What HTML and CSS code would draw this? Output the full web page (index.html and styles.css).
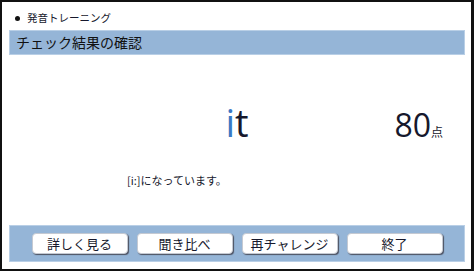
FILE: index.html
```html
<!DOCTYPE html>
<html lang="ja">
<head>
    <meta charset="UTF-8">
    <title>チェック結果の確認</title>
    <link rel="stylesheet" href="styles.css">
</head>
<body>
    <div class="screen">
        <div class="crumb"><span class="dot"></span>発音トレーニング</div>
        <div class="title-bar">チェック結果の確認</div>

        <div class="result">
            <div class="word-row">
                <div></div>
                <div class="word"><span class="hit">i</span>t</div>
                <div class="score">80<span class="unit">点</span></div>
            </div>
            <p class="message">[i:]になっています。</p>
        </div>

        <div class="button-bar">
            <button>詳しく見る</button>
            <button>聞き比べ</button>
            <button>再チャレンジ</button>
            <button>終了</button>
        </div>
    </div>
</body>
</html>
```

FILE: styles.css
```css
html, body {
    margin: 0;
    padding: 0;
    background: #fff;
    font-family: "Noto Sans CJK JP", "Noto Sans", sans-serif;
    color: #16182c;
}

.screen {
    width: 474px;
    height: 271px;
    box-sizing: border-box;
    border: 2px solid #111;
    border-right-width: 3px;
    padding: 0 6px 7px 7px;
    display: flex;
    flex-direction: column;
}

.crumb {
    padding-top: 8px;
    margin-bottom: 4px;
    height: 16px;
    line-height: 16px;
    font-size: 10.5px;
    display: flex;
    align-items: center;
}

.dot {
    width: 5px;
    height: 5px;
    border-radius: 50%;
    background: #111;
    margin: 0 7px 0 6px;
}

.title-bar {
    height: 25px;
    box-sizing: border-box;
    background: #95b5d7;
    border: 1px solid #b9cfe6;
    padding-left: 6px;
    font-size: 14px;
    line-height: 23px;
    color: #111;
}

.result {
    flex: 1;
    padding-top: 45px;
}

.word-row {
    display: grid;
    grid-template-columns: 1fr auto 1fr;
    align-items: baseline;
}

.word {
    font-family: "Open Sans", sans-serif;
    font-size: 38px;
    line-height: 44px;
    color: #16182c;
}

.hit {
    color: #3b78c4;
}

.score {
    justify-self: end;
    margin-right: 22px;
    font-family: "Open Sans", sans-serif;
    font-size: 32px;
    line-height: 44px;
}

.unit {
    font-family: "Noto Sans CJK JP", sans-serif;
    font-size: 12px;
}

.message {
    margin: 18px 0 0 118px;
    font-size: 11px;
    line-height: 16px;
}

.button-bar {
    height: 37px;
    box-sizing: border-box;
    background: #95b5d7;
    border: 1px solid #b9cfe6;
    display: flex;
    justify-content: center;
    align-items: center;
    gap: 9px;
}

.button-bar button {
    width: 96px;
    height: 21px;
    padding: 0;
    background: #fff;
    border: 1px solid #c4c9d2;
    border-radius: 4px;
    box-shadow: 1px 1px 1px #4c5160;
    font-family: "Noto Sans CJK JP", sans-serif;
    font-size: 13px;
    line-height: 19px;
    color: #16182c;
}
```
